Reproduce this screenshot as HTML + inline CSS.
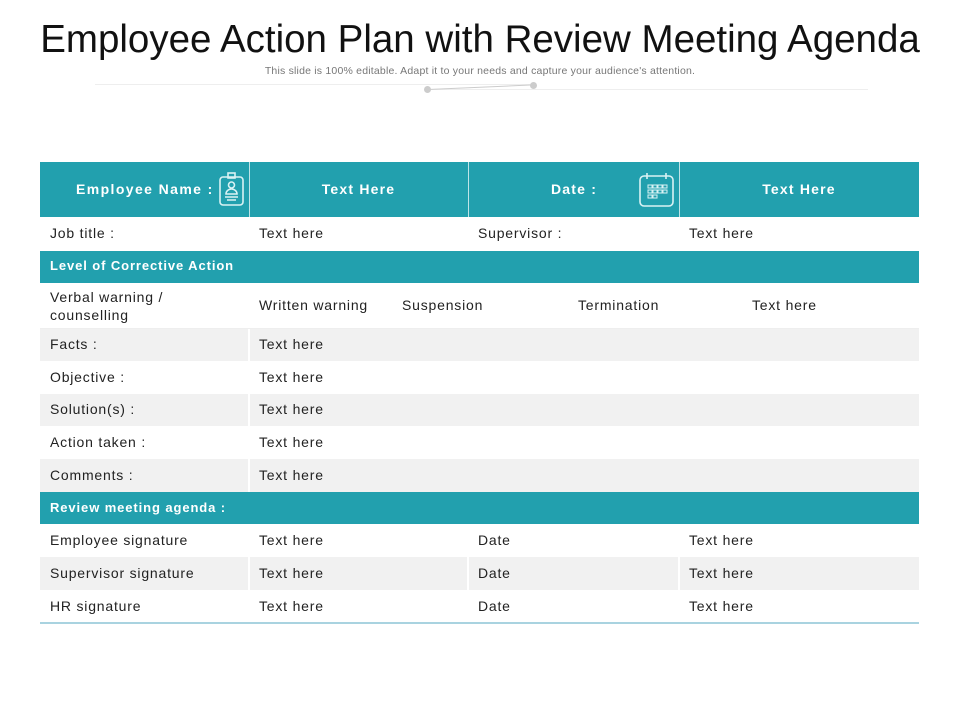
<!DOCTYPE html>
<html><head><meta charset="utf-8"><style>
*{margin:0;padding:0;box-sizing:border-box}
body{width:960px;height:720px;background:#fff;position:relative;font-family:"Century Gothic","Liberation Sans",sans-serif;overflow:hidden}
.a{position:absolute}
.t{position:absolute;font-size:14px;color:#222;white-space:nowrap;letter-spacing:0.8px}
.h{position:absolute;color:#fff;font-weight:bold;font-size:14px;white-space:nowrap;letter-spacing:1.2px}
.teal{position:absolute;background:#22a0ae}
.g{position:absolute;background:#f1f1f1}
</style></head><body>
<div class="a" style="left:0;top:18px;width:960px;text-align:center;font-size:38.5px;color:#111">Employee Action Plan with Review Meeting Agenda</div>
<div class="a" style="left:0;top:65px;width:960px;text-align:center;font-size:10.5px;color:#777;letter-spacing:0.2px">This slide is 100% editable. Adapt it to your needs and capture your audience's attention.</div>
<div class="a" style="left:95px;top:84px;width:440px;height:1px;background:#eee"></div>
<div class="a" style="left:428px;top:89px;width:440px;height:1px;background:#eee"></div>
<div class="a" style="left:428px;top:89px;width:105px;height:1px;background:#ccc;transform:rotate(-2.5deg);transform-origin:left"></div>
<div class="a" style="left:424px;top:86px;width:7px;height:7px;border-radius:50%;background:#ccc"></div>
<div class="a" style="left:530px;top:82px;width:7px;height:7px;border-radius:50%;background:#ccc"></div>

<div class="teal" style="left:40px;top:162px;width:879px;height:55px"></div>
<div class="a" style="left:249px;top:162px;width:1px;height:55px;background:#bfe4e8"></div>
<div class="a" style="left:468px;top:162px;width:1px;height:55px;background:#bfe4e8"></div>
<div class="a" style="left:679px;top:162px;width:1px;height:55px;background:#bfe4e8"></div>
<div class="h" style="left:76px;top:181px;letter-spacing:1.4px">Employee Name :</div>
<svg class="a" style="left:218px;top:172px" width="27" height="34" viewBox="0 0 27 34" fill="none" stroke="#d9f2f4" stroke-width="1.6"><rect x="2" y="5" width="23" height="28" rx="3"/><rect x="10" y="1" width="7" height="5"/><circle cx="13.5" cy="13" r="3"/><path d="M8 22a5.5 5 0 0 1 11 0zM7 25h13M9 28h9"/></svg>
<div class="h" style="left:249px;top:181px;width:219px;text-align:center">Text Here</div>
<div class="h" style="left:551px;top:181px">Date :</div>
<svg class="a" style="left:638px;top:172px" width="37" height="36" viewBox="0 0 37 36" fill="none" stroke="#d9f2f4" stroke-width="1.6"><rect x="2" y="4" width="33" height="30" rx="4"/><path d="M9 1v6M28 1v6"/><g stroke-width="1"><rect x="10" y="13" width="4" height="3"/><rect x="15" y="13" width="4" height="3"/><rect x="20" y="13" width="4" height="3"/><rect x="25" y="13" width="4" height="3"/><rect x="10" y="18" width="4" height="3"/><rect x="15" y="18" width="4" height="3"/><rect x="20" y="18" width="4" height="3"/><rect x="25" y="18" width="4" height="3"/><rect x="10" y="23" width="4" height="3"/><rect x="15" y="23" width="4" height="3"/></g></svg>
<div class="h" style="left:679px;top:181px;width:240px;text-align:center">Text Here</div>

<div class="t" style="left:50px;top:225px">Job title :</div>
<div class="t" style="left:259px;top:225px">Text here</div>
<div class="t" style="left:478px;top:225px">Supervisor :</div>
<div class="t" style="left:689px;top:225px">Text here</div>

<div class="teal" style="left:40px;top:251px;width:879px;height:32px"></div>
<div class="h" style="left:50px;top:258px;font-size:13px;letter-spacing:0.9px">Level of Corrective Action</div>

<div class="t" style="left:50px;top:288px;line-height:18px">Verbal warning /<br>counselling</div>
<div class="t" style="left:259px;top:297px">Written warning</div>
<div class="t" style="left:402px;top:297px">Suspension</div>
<div class="t" style="left:578px;top:297px">Termination</div>
<div class="t" style="left:752px;top:297px">Text here</div>
<div class="a" style="left:40px;top:328px;width:879px;height:1px;background:#eee"></div>

<div class="g" style="left:40px;top:329px;width:208px;height:32px"></div><div class="g" style="left:250px;top:329px;width:669px;height:32px"></div>
<div class="g" style="left:40px;top:394px;width:208px;height:32px"></div><div class="g" style="left:250px;top:394px;width:669px;height:32px"></div>
<div class="g" style="left:40px;top:459px;width:208px;height:33px"></div><div class="g" style="left:250px;top:459px;width:669px;height:33px"></div>
<div class="t" style="left:50px;top:336px">Facts :</div><div class="t" style="left:259px;top:336px">Text here</div>
<div class="t" style="left:50px;top:369px">Objective :</div><div class="t" style="left:259px;top:369px">Text here</div>
<div class="t" style="left:50px;top:401px">Solution(s) :</div><div class="t" style="left:259px;top:401px">Text here</div>
<div class="t" style="left:50px;top:434px">Action taken :</div><div class="t" style="left:259px;top:434px">Text here</div>
<div class="t" style="left:50px;top:467px">Comments :</div><div class="t" style="left:259px;top:467px">Text here</div>

<div class="teal" style="left:40px;top:492px;width:879px;height:32px"></div>
<div class="h" style="left:50px;top:500px;font-size:13px;letter-spacing:0.9px">Review meeting agenda :</div>

<div class="g" style="left:40px;top:557px;width:208px;height:33px"></div>
<div class="g" style="left:250px;top:557px;width:217px;height:33px"></div>
<div class="g" style="left:469px;top:557px;width:209px;height:33px"></div>
<div class="g" style="left:680px;top:557px;width:239px;height:33px"></div>
<div class="t" style="left:50px;top:532px">Employee signature</div><div class="t" style="left:259px;top:532px">Text here</div><div class="t" style="left:478px;top:532px">Date</div><div class="t" style="left:689px;top:532px">Text here</div>
<div class="t" style="left:50px;top:565px">Supervisor signature</div><div class="t" style="left:259px;top:565px">Text here</div><div class="t" style="left:478px;top:565px">Date</div><div class="t" style="left:689px;top:565px">Text here</div>
<div class="t" style="left:50px;top:598px">HR signature</div><div class="t" style="left:259px;top:598px">Text here</div><div class="t" style="left:478px;top:598px">Date</div><div class="t" style="left:689px;top:598px">Text here</div>
<div class="a" style="left:40px;top:622px;width:879px;height:2px;background:#a9d3e0"></div>
</body></html>
